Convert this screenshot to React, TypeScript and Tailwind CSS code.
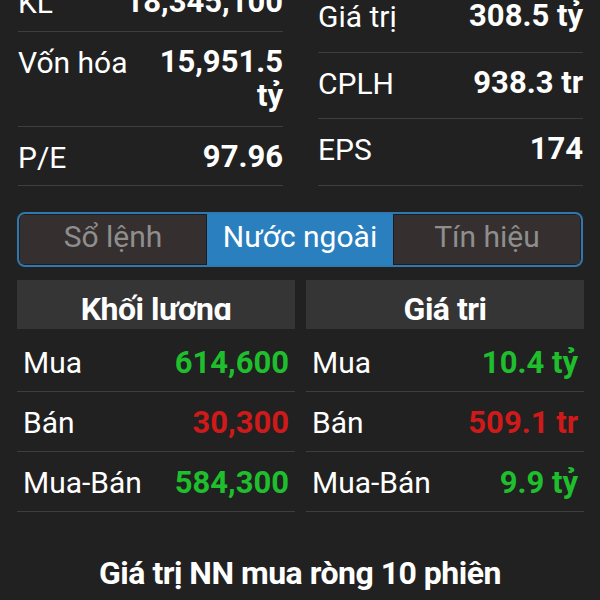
import React from 'react';

type Stat = { label: string; value: React.ReactNode; h: string };

const leftStats: Stat[] = [
  { label: 'KL', value: '18,345,100', h: 'h-[60px]' },
  {
    label: 'Vốn hóa',
    value: (
      <>
        15,951.5
        <br />
        tỷ
      </>
    ),
    h: 'h-[95px]',
  },
  { label: 'P/E', value: '97.96', h: 'h-[59px]' },
];

const rightStats: Stat[] = [
  { label: 'Giá trị', value: '308.5 tỷ', h: 'h-[67px]' },
  { label: 'CPLH', value: '938.3 tr', h: 'h-[66px]' },
  { label: 'EPS', value: '174', h: 'h-[67px]' },
];

type Flow = { label: string; value: string; up: boolean };

const volume: Flow[] = [
  { label: 'Mua', value: '614,600', up: true },
  { label: 'Bán', value: '30,300', up: false },
  { label: 'Mua-Bán', value: '584,300', up: true },
];

const amount: Flow[] = [
  { label: 'Mua', value: '10.4 tỷ', up: true },
  { label: 'Bán', value: '509.1 tr', up: false },
  { label: 'Mua-Bán', value: '9.9 tỷ', up: true },
];

const tabs = ['Sổ lệnh', 'Nước ngoài', 'Tín hiệu'];

const StatColumn = ({ stats }: { stats: Stat[] }) => (
  <div className="flex flex-col">
    {stats.map(s => (
      <div
        key={s.label}
        className={`flex items-start justify-between border-b border-[#3e3e3e] pt-[13px] ${s.h}`}
      >
        <span className="text-[30px] leading-[35px] whitespace-nowrap">{s.label}</span>
        <span className="text-right text-[31px] font-bold leading-[34px]">{s.value}</span>
      </div>
    ))}
  </div>
);

const FlowTable = ({ title, rows }: { title: string; rows: Flow[] }) => (
  <div className="flex flex-col">
    <div className="h-[49px] bg-[#353535]">
      <div className="h-[40px] overflow-hidden pt-[9px] text-center text-[32px] font-bold leading-[40px] tracking-[-0.5px]">
        {title}
      </div>
    </div>
    <div className="pt-[3px]">
      {rows.map(r => (
        <div
          key={r.label}
          className="flex h-[60px] items-start justify-between border-b border-[#3e3e3e] px-[6px] pt-[13px]"
        >
          <span className="text-[30px] leading-[35px]">{r.label}</span>
          <span
            className={`text-[31px] font-bold leading-[35px] ${r.up ? 'text-[#1fbe2d]' : 'text-[#cf1a1a]'}`}
          >
            {r.value}
          </span>
        </div>
      ))}
    </div>
  </div>
);

const App = () => {
  const active = 1;

  return (
    <div className="h-[600px] w-[600px] overflow-hidden bg-[#212121] font-['Roboto'] text-white">
      <div className="-mt-[28px] grid grid-cols-2 items-end gap-[35px] pl-[18px] pr-[17px]">
        <StatColumn stats={leftStats} />
        <StatColumn stats={rightStats} />
      </div>

      <div className="mx-[17px] mt-[26px] flex h-[55px] overflow-hidden rounded-lg border-2 border-[#2f79b0] bg-[#1e1e1e]">
        {tabs.map((t, i) => (
          <div
            key={t}
            className={`flex flex-1 items-center justify-center pb-[6px] text-[30px] ${
              i === active ? 'bg-[#2a7fbf] text-white' : 'm-[1px] bg-[#35302f] text-[#8e8e8e]'
            }`}
          >
            {t}
          </div>
        ))}
      </div>

      <div className="mt-[13px] grid grid-cols-2 gap-[11px] pl-[17px] pr-[16px]">
        <FlowTable title="Khối lương" rows={volume} />
        <FlowTable title="Giá tri" rows={amount} />
      </div>

      <div className="mt-[41px] text-center text-[32px] font-bold leading-[40px] tracking-[-0.5px]">
        Giá trị NN mua ròng 10 phiên
      </div>
    </div>
  );
};

export default App;
